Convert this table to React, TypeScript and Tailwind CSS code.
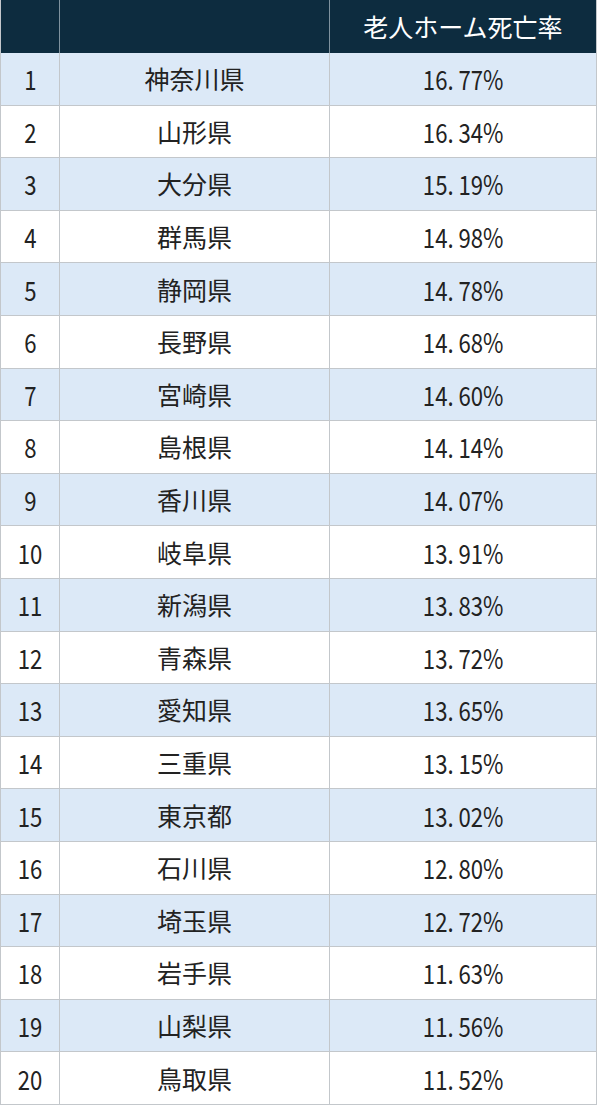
import * as React from 'react';

const rows: [string, string][] = [
    ['神奈川県', '16.77'],
    ['山形県', '16.34'],
    ['大分県', '15.19'],
    ['群馬県', '14.98'],
    ['静岡県', '14.78'],
    ['長野県', '14.68'],
    ['宮崎県', '14.60'],
    ['島根県', '14.14'],
    ['香川県', '14.07'],
    ['岐阜県', '13.91'],
    ['新潟県', '13.83'],
    ['青森県', '13.72'],
    ['愛知県', '13.65'],
    ['三重県', '13.15'],
    ['東京都', '13.02'],
    ['石川県', '12.80'],
    ['埼玉県', '12.72'],
    ['岩手県', '11.63'],
    ['山梨県', '11.56'],
    ['鳥取県', '11.52'],
];

const Rate = ({ value }: { value: string }) => {
    const [whole, frac] = value.split('.');
    return (
        <span className="inline-block origin-center scale-x-[0.82] text-[27px] leading-none">
            {whole}
            <span className="mr-[6px]">.</span>
            {frac}%
        </span>
    );
};

const App = () => {
    return (
        <div className="w-[600px] min-h-[1106px] bg-white" style={{ fontFamily: '"Noto Sans CJK JP", "Noto Sans", sans-serif' }}>
            <div className="w-[597px] border-l border-[#c3c7cb] text-[#222]">
                <div className="flex h-[53px] bg-[#0d2c3f] text-white">
                    <div className="w-[59px] border-r border-[#7f929e]" />
                    <div className="w-[270px] border-r border-[#7f929e]" />
                    <div className="flex flex-1 items-center justify-center border-r border-[#c3c7cb] text-[25px] leading-none">
                        老人ホーム死亡率
                    </div>
                </div>
                {rows.map(([pref, rate], i) => (
                    <div
                        key={pref}
                        className={`flex h-[52.6px] border-b border-[#c3c7cb] ${i % 2 === 0 ? 'bg-[#dce9f7]' : 'bg-white'}`}
                    >
                        <div className="flex w-[59px] items-center justify-center border-r border-[#c3c7cb]">
                            <span className="inline-block scale-x-[0.82] text-[27px] leading-none">{i + 1}</span>
                        </div>
                        <div className="flex w-[270px] items-center justify-center border-r border-[#c3c7cb] text-[25px] leading-none">
                            {pref}
                        </div>
                        <div className="flex flex-1 items-center justify-center border-r border-[#c3c7cb]">
                            <Rate value={rate} />
                        </div>
                    </div>
                ))}
            </div>
        </div>
    );
};

export default App;
